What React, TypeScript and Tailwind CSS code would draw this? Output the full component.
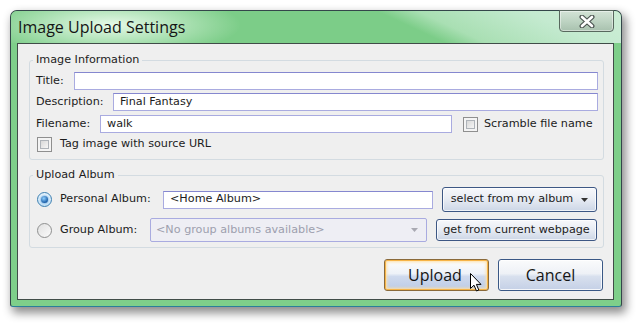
import React from "react";

const body = { fontFamily: '"DejaVu Sans", Verdana, sans-serif' };
const ui = { fontFamily: '"Open Sans", "Noto Sans", sans-serif' };

const Checkbox = () => (
  <span className="block h-[15px] w-[15px] shrink-0 border border-[#8f8f8f] bg-[#f4f4f4] p-[2px]">
    <span className="block h-full w-full border border-[#aeb3b9] bg-[linear-gradient(135deg,#d8d8d8,#f6f6f6)]" />
  </span>
);

const Radio = ({ checked }: { checked?: boolean }) => (
  <span
    className={
      "flex h-[15px] w-[15px] shrink-0 items-center justify-center rounded-full border " +
      (checked
        ? "border-[#3c7fb1] bg-[linear-gradient(180deg,#e6f3fc,#c4e2f7)]"
        : "border-[#8e8f8f] bg-[linear-gradient(135deg,#e0e0e0,#fbfbfb)]")
    }
  >
    {checked && (
      <span className="block h-[7px] w-[7px] rounded-full bg-[radial-gradient(circle_at_40%_35%,#8fd0ff,#1b5ea8_70%,#103f80)] shadow-[0_0_2px_#2a7fd0]" />
    )}
  </span>
);

const Arrow = ({ color }: { color: string }) => (
  <svg width="7" height="4" viewBox="0 0 7 4">
    <path d="M0 0 H7 L3.5 4 Z" fill={color} />
  </svg>
);

const TextInput = ({ value, className }: { value?: string; className: string }) => (
  <div
    className={
      "flex h-[18px] items-center border border-[#a9abe0] border-t-[#8587cf] bg-white pl-[6px] text-[#1c1c1c] " +
      className
    }
  >
    {value}
  </div>
);

const SmallButton = ({ children, className }: { children: React.ReactNode; className: string }) => (
  <div
    className={
      "flex items-center justify-center rounded-[3px] border border-[#3d5784] bg-[linear-gradient(180deg,#f7f8fb_0%,#e9edf4_45%,#ccd6e6_100%)] text-[#1c1c1c] shadow-[inset_0_0_0_1px_rgba(255,255,255,0.7)] " +
      className
    }
  >
    {children}
  </div>
);

export default function App() {
  return (
    <div className="relative h-[326px] w-[640px] overflow-hidden bg-white pl-[10px] pt-[10px]">
      <div className="flex h-[297px] w-[612px] flex-col rounded-t-[7px] rounded-b-[3px] border border-[#34464a] border-b-[#2a7f9a] bg-[#7ecf8a] shadow-[3px_5px_10px_1px_rgba(0,0,0,0.45)]">
        {/* title bar */}
        <div className="flex h-[32px] shrink-0 items-start justify-between rounded-t-[6px] bg-[radial-gradient(ellipse_130px_32px_at_100px_14px,rgba(236,252,238,0.95),rgba(236,252,238,0)_100%),linear-gradient(25deg,#7ccd88_0%,#7ccd88_64%,#a9dfb3_70%,#c4ead0_86%,#cdeed6_100%)]">
          <span
            className="pl-[7px] pt-[5px] text-[16px] leading-[22px] text-[#151515]"
            style={ui}
          >
            Image Upload Settings
          </span>
          <div className="mr-[7px] -mt-[1px] flex h-[22px] w-[55px] items-center justify-center rounded-b-[4px] border border-[#58685e] bg-[linear-gradient(180deg,#d3e3d6_0%,#bed4c3_50%,#a8c1ae_100%)] shadow-[inset_0_0_0_1px_rgba(255,255,255,0.45)]">
            <svg width="16" height="13" viewBox="0 0 16 13">
              <path d="M3 2 L13 11 M13 2 L3 11" stroke="#4d5652" strokeWidth="5" strokeLinecap="round" />
              <path d="M3 2 L13 11 M13 2 L3 11" stroke="#ffffff" strokeWidth="2.6" strokeLinecap="round" />
            </svg>
          </div>
        </div>

        {/* client area */}
        <div className="mb-[6px] ml-[6px] mr-[7px] flex flex-1 flex-col border border-[#404c48] bg-[#efefef] text-[11.2px] text-[#1c1c1c]" style={body}>
          <fieldset className="ml-[11px] mr-[9px] mt-[9px] rounded-[3px] border border-[#d3dbe1]">
            <legend className="ml-[3px] px-[3px] leading-[14px]">Image Information</legend>
            <div className="flex flex-col pb-[7px] pl-[6px] pr-[5px] pt-[5px]">
              <div className="flex h-[18px] items-center">
                <span className="w-[38px]">Title:</span>
                <TextInput className="flex-1" />
              </div>
              <div className="mt-[3px] flex h-[18px] items-center">
                <span className="w-[77px]">Description:</span>
                <TextInput className="flex-1" value="Final Fantasy" />
              </div>
              <div className="mt-[4px] flex h-[18px] items-center">
                <span className="w-[64px]">Filename:</span>
                <TextInput className="w-[352px] border-t-[#a9abe0]" value="walk" />
                <span className="ml-[11px]">
                  <Checkbox />
                </span>
                <span className="ml-[6px]">Scramble file name</span>
              </div>
              <div className="mt-[4px] flex h-[15px] items-center pl-[1px]">
                <Checkbox />
                <span className="ml-[8px]">Tag image with source URL</span>
              </div>
            </div>
          </fieldset>

          <fieldset className="ml-[11px] mr-[9px] mt-[8px] rounded-[3px] border border-[#d3dbe1]">
            <legend className="ml-[3px] px-[3px] leading-[14px]">Upload Album</legend>
            <div className="flex flex-col pb-[5px] pl-[7px] pr-[6px] pt-[5px]">
              <div className="flex h-[25px] items-center">
                <Radio checked />
                <span className="ml-[8px] w-[103px]">Personal Album:</span>
                <TextInput className="h-[17px] w-[270px]" value="<Home Album>" />
                <SmallButton className="ml-[9px] h-[25px] w-[155px] gap-[8px]">
                  <span>select from my album</span>
                  <Arrow color="#333333" />
                </SmallButton>
              </div>
              <div className="mt-[6px] flex h-[24px] items-center">
                <Radio />
                <span className="ml-[8px] w-[90px]">Group Album:</span>
                <div className="flex h-[24px] w-[277px] items-center justify-between rounded-[2px] border border-[#a9abe0] bg-[#eeeef4] pl-[5px] pr-[8px] text-[#9d9fae]">
                  <span>&lt;No group albums available&gt;</span>
                  <Arrow color="#a9a9b2" />
                </div>
                <SmallButton className="ml-[9px] h-[22px] w-[161px]">get from current webpage</SmallButton>
              </div>
            </div>
          </fieldset>

          <div className="mr-[10px] mt-[11px] flex justify-end gap-[9px]" style={ui}>
            <div className="flex h-[32px] w-[105px] items-center justify-center rounded-[3px] border border-[#8a6a3a] bg-[linear-gradient(180deg,#fdfdfd_0%,#eef2f8_45%,#cfdaee_55%,#bccbe6_100%)] pr-[3px] text-[16px] text-[#151515] shadow-[inset_0_0_0_1px_#f7b447,inset_0_0_3px_2px_#fde0a6]">
              Upload
            </div>
            <div className="flex h-[32px] w-[105px] items-center justify-center rounded-[3px] border border-[#3a5885] bg-[linear-gradient(180deg,#fafbfc_0%,#eef1f6_45%,#d8e0ee_55%,#c4d0e6_100%)] text-[16px] text-[#151515] shadow-[inset_0_0_0_1px_rgba(255,255,255,0.8)]">
              Cancel
            </div>
          </div>
        </div>
      </div>

      {/* mouse pointer */}
      <svg className="absolute left-[470px] top-[273px]" width="12" height="19" viewBox="0 0 12 19">
        <path d="M0.5 0.5 L0.5 15.5 L4 12.2 L6.5 18 L8.8 17 L6.4 11.4 L11 11.4 Z" fill="#ffffff" stroke="#000000" strokeWidth="1" strokeLinejoin="round" />
      </svg>
    </div>
  );
}
